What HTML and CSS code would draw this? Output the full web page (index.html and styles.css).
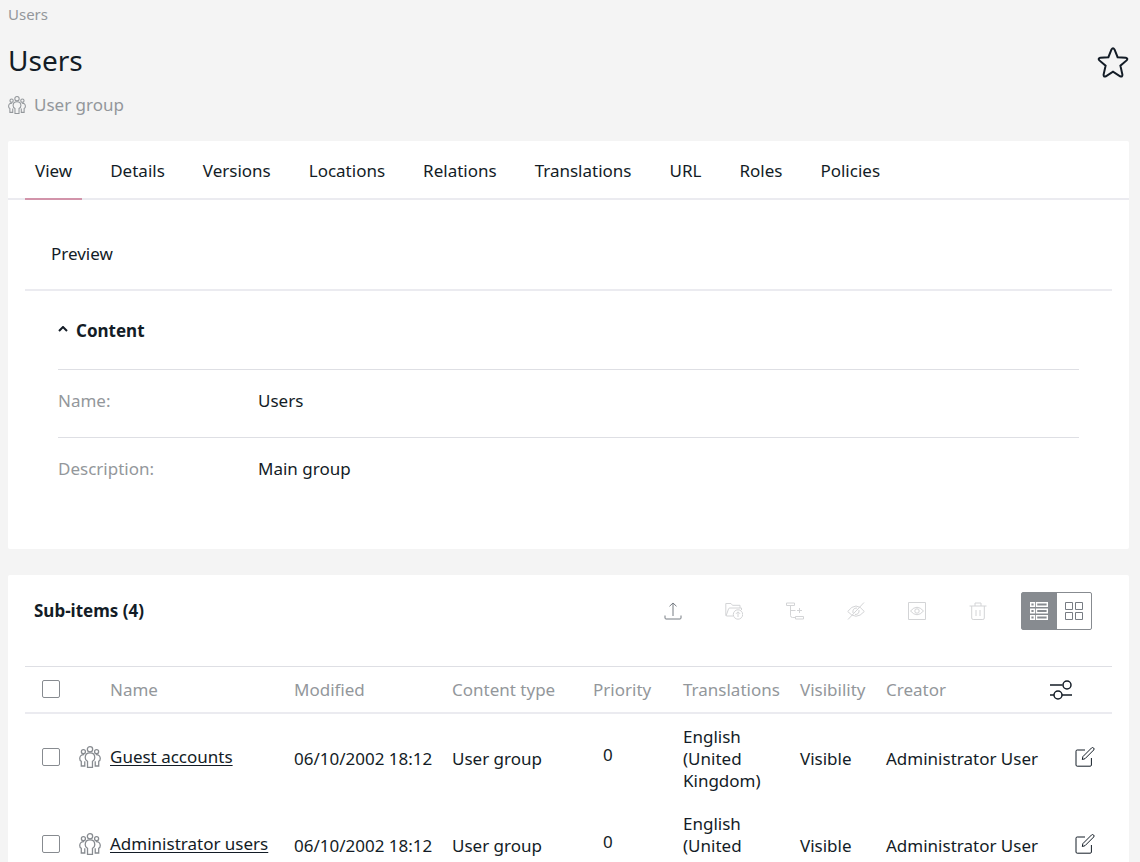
FILE: index.html
```html
<!DOCTYPE html>
<html lang="en">

<head>
    <meta charset="UTF-8">
    <meta name="viewport" content="width=device-width, initial-scale=1.0">
    <title>Users</title>
    <link rel="stylesheet" href="styles.css">
</head>

<body>
    <!-- shared icons -->
    <svg class="sprite" aria-hidden="true">
        <symbol id="user_group" viewBox="0 0 24 24">
            <circle cx="12" cy="3.6" r="2.9" />
            <circle cx="4.8" cy="6.2" r="2.2" />
            <circle cx="19.2" cy="6.2" r="2.2" />
            <path d="M9.3 23.3v-6.6c-1.7-.7-2.5-2-2.5-3.9 0-3.1 2-5.2 5.2-5.2s5.2 2.1 5.2 5.2c0 1.9-.8 3.2-2.5 3.9v6.6z" />
            <path d="M5.6 9.5C2.6 9.3.8 11 .8 13.5c0 1.6.7 2.6 1.7 3.2v5.1h3.8v-5.2" />
            <path d="M18.4 9.5c3-.2 4.8 1.5 4.8 4 0 1.6-.7 2.6-1.7 3.2v5.1h-3.8v-5.2" />
        </symbol>
        <symbol id="edit" viewBox="0 0 20 20">
            <path d="M10 3H2.2Q1 3 1 4.2V18q0 1.2 1.2 1.2h13q1.2 0 1.2-1.2v-7" />
            <path d="M7.3 12.5l.6-2.9L16.6.9q1-.8 2 .1t.1 2L10 11.7z" />
        </symbol>
    </svg>

    <header class="page_header">
        <nav class="breadcrumb" aria-label="Breadcrumb"><a href="#">Users</a></nav>
        <div class="title_row">
            <h1>Users</h1>
            <button class="icon_btn" type="button" aria-label="Bookmark">
                <svg class="star" viewBox="0 0 32 32"><path d="M14.5 2.5q1.5-2.5 3 0l3.1 7.7 8.2.5q2.6.6.8 2.7l-6.2 5.3 2 8.9q.2 2.6-2.3 1.7L16 24.7l-7.1 4.6q-2.5.9-2.3-1.7l2-8.9-6.2-5.3q-1.8-2.1.8-2.7l8.200-.5z" /></svg>
            </button>
        </div>
        <div class="content_type">
            <svg class="icon_small"><use href="#user_group" /></svg>
            <span>User group</span>
        </div>
    </header>

    <main>
        <section class="card">
            <nav class="tabs">
                <a class="active" href="#">View</a>
                <a href="#">Details</a>
                <a href="#">Versions</a>
                <a href="#">Locations</a>
                <a href="#">Relations</a>
                <a href="#">Translations</a>
                <a href="#">URL</a>
                <a href="#">Roles</a>
                <a href="#">Policies</a>
            </nav>
            <div class="preview">
                <h2>Preview</h2>
                <div class="fields">
                    <button class="collapse" type="button" aria-expanded="true">
                        <svg viewBox="0 0 10 6"><path d="M1 5l4-4 4 4" /></svg>
                        Content
                    </button>
                    <dl>
                        <div class="field">
                            <dt>Name:</dt>
                            <dd>Users</dd>
                        </div>
                        <div class="field">
                            <dt>Description:</dt>
                            <dd>Main group</dd>
                        </div>
                    </dl>
                </div>
            </div>
        </section>

        <section class="card sub_items">
            <div class="toolbar">
                <h2>Sub-items (4)</h2>
                <div class="actions">
                    <button class="icon_btn" type="button" aria-label="Upload">
                        <svg viewBox="0 0 18 18"><path d="M9 14V1M5.5 4.3L9 1l3.5 3.3M1 13.5V16q0 1 1 1h14q1 0 1-1v-2.5" /></svg>
                    </button>
                    <button class="icon_btn" type="button" aria-label="Move" disabled>
                        <svg viewBox="0 0 18 18"><path d="M8 14H2q-1 0-1.2-1V1.5H6L7.5 3.3H15V6M1 14L3.5 7q.3-1 1.3-1H16.5v2" /><circle cx="13" cy="12.5" r="4.7" /><path d="M13 15v-5M11 11.8l2-2 2 2" /></svg>
                    </button>
                    <button class="icon_btn" type="button" aria-label="Add location" disabled>
                        <svg viewBox="0 0 18 18"><path d="M.5 1h8v2.5h-8zM9.5 14.5h8V17h-8zM4.5 3.5v10q0 2 2 2h3M4.5 8.5h5M11 8.5h5M13.5 6v5" /></svg>
                    </button>
                    <button class="icon_btn" type="button" aria-label="Hide" disabled>
                        <svg viewBox="0 0 18 18"><path d="M.7 9.5Q9-1.5 17.3 9.5 9 19 .7 9.5zM1 17.5L17 .5" /><path d="M6 11q-.8-5 4-5M12 8q.5 4.5-4 4.5" /></svg>
                    </button>
                    <button class="icon_btn" type="button" aria-label="Reveal" disabled>
                        <svg viewBox="0 0 18 18"><path d="M.5.5h17v17H.5zM2.5 9Q9 1.5 15.5 9 9 16.5 2.5 9z" /><circle cx="9" cy="9" r="2.2" /></svg>
                    </button>
                    <button class="icon_btn" type="button" aria-label="Delete" disabled>
                        <svg viewBox="0 0 18 18"><path d="M.5 4h17M6 4V1h6v3M2.7 4v12q0 1.5 1.5 1.5h9.6q1.5 0 1.5-1.5V4M7 8v6M11 8v6" /></svg>
                    </button>
                </div>
                <div class="view_switch">
                    <button class="selected" type="button" aria-label="List view">
                        <svg viewBox="0 0 18 18"><path d="M.7.7h3.6v3.6H.7zM6.5.7h10.8v3.6H6.5zM.7 7.2h3.6v3.6H.7zM6.5 7.2h10.8v3.6H6.5zM.7 13.7h3.6v3.6H.7zM6.5 13.7h10.8v3.6H6.5z" /></svg>
                    </button>
                    <button type="button" aria-label="Grid view">
                        <svg viewBox="0 0 18 18"><path d="M.5.5h7v7h-7zM10.5.5h7v7h-7zM.5 10.5h7v7h-7zM10.5 10.5h7v7h-7z" /></svg>
                    </button>
                </div>
            </div>

            <table>
                <colgroup>
                    <col class="col_check">
                    <col class="col_icon">
                    <col>
                    <col class="col_modified">
                    <col class="col_type">
                    <col class="col_priority">
                    <col class="col_translations">
                    <col class="col_visibility">
                    <col class="col_creator">
                    <col class="col_edit">
                </colgroup>
                <thead>
                    <tr>
                        <th class="check"><input type="checkbox" aria-label="Select all"></th>
                        <th></th>
                        <th>Name</th>
                        <th>Modified</th>
                        <th>Content type</th>
                        <th>Priority</th>
                        <th>Translations</th>
                        <th>Visibility</th>
                        <th>Creator</th>
                        <th>
                            <button class="icon_btn" type="button" aria-label="Configure columns">
                                <svg class="settings" viewBox="0 0 22 20"><path d="M0 5h12.5M0 15h4M12 15h10" /><circle cx="17" cy="5" r="4" /><circle cx="8" cy="15" r="4" /></svg>
                            </button>
                        </th>
                    </tr>
                </thead>
                <tbody>
                    <tr>
                        <td class="check"><input type="checkbox" aria-label="Select Guest accounts"></td>
                        <td class="type_icon"><svg><use href="#user_group" /></svg></td>
                        <td class="name"><a href="#">Guest accounts</a></td>
                        <td>06/10/2002 18:12</td>
                        <td>User group</td>
                        <td class="priority">0</td>
                        <td>English (United Kingdom)</td>
                        <td>Visible</td>
                        <td>Administrator User</td>
                        <td class="edit">
                            <button class="icon_btn" type="button" aria-label="Edit Guest accounts"><svg><use href="#edit" /></svg></button>
                        </td>
                    </tr>
                    <tr>
                        <td class="check"><input type="checkbox" aria-label="Select Administrator users"></td>
                        <td class="type_icon"><svg><use href="#user_group" /></svg></td>
                        <td class="name"><a href="#">Administrator users</a></td>
                        <td>06/10/2002 18:12</td>
                        <td>User group</td>
                        <td class="priority">0</td>
                        <td>English (United Kingdom)</td>
                        <td>Visible</td>
                        <td>Administrator User</td>
                        <td class="edit">
                            <button class="icon_btn" type="button" aria-label="Edit Administrator users"><svg><use href="#edit" /></svg></button>
                        </td>
                    </tr>
                </tbody>
            </table>
        </section>
    </main>
</body>

</html>
```

FILE: styles.css
```css
* {
    margin: 0;
    padding: 0;
    box-sizing: border-box;
}
body {
    background-color: #f4f4f4;
    color: #131c26;
    font-family: "Noto Sans", sans-serif;
    font-size: 17px;
    line-height: 22px;
    padding: 0 11px 0 8px;
}
a {
    color: inherit;
    text-decoration: none;
}
button {
    font: inherit;
    color: inherit;
    background: none;
    border: 0;
    cursor: pointer;
}
svg {
    display: block;
    fill: none;
    stroke: currentColor;
}
.sprite {
    display: none;
}
.icon_btn {
    display: block;
}

/* header */
.page_header {
    height: 141px;
    padding-top: 4px;
}
.breadcrumb {
    font-size: 15px;
    line-height: 20px;
    color: #93979b;
}
.title_row {
    display: flex;
    justify-content: space-between;
    align-items: flex-end;
    padding-top: 17px;
}
h1 {
    font-size: 28px;
    font-weight: 400;
    line-height: 38px;
}
.star {
    width: 32px;
    height: 32px;
    stroke-width: 2;
}
.content_type {
    display: flex;
    align-items: center;
    gap: 8px;
    padding-top: 15px;
    color: #93979b;
}
.icon_small {
    width: 18px;
    height: 18px;
    stroke-width: 1.4;
}

/* cards */
.card {
    background-color: white;
    border-radius: 2px;
}
.tabs {
    display: flex;
    gap: 18px;
    height: 59px;
    padding: 0 17px;
    border-bottom: 2px solid #ebebf0;
}
.tabs a {
    height: 59px;
    padding: 0 10px;
    line-height: 60px;
}
.tabs .active {
    border-bottom: 2px solid #d294aa;
}
.preview {
    padding: 0 17px 44px;
}
.preview h2 {
    padding: 43px 26px 24px;
    border-bottom: 2px solid #ebebf0;
    font-size: 17px;
    font-weight: 400;
}
.fields {
    padding: 0 33px;
}
.collapse {
    display: flex;
    align-items: center;
    gap: 8px;
    padding: 29px 0 27px;
    font-weight: 700;
}
.collapse svg {
    width: 10px;
    height: 6px;
    margin-bottom: 4px;
    stroke-width: 2;
}
.field {
    display: flex;
    padding: 20px 0 25px;
    border-top: 1px solid #dedfe4;
}
.field dt {
    width: 200px;
    color: #93979b;
}

/* sub-items */
.sub_items {
    margin-top: 26px;
    padding: 0 17px;
}
.toolbar {
    display: flex;
    align-items: center;
    padding: 17px 20px 36px 9px;
}
.toolbar h2 {
    flex: 1;
    font-size: 17px;
    font-weight: 700;
}
.actions {
    display: flex;
    gap: 43px;
    margin-right: 34px;
    color: #777c83;
}
.actions svg {
    width: 18px;
    height: 18px;
}
.actions button:disabled {
    color: #d3d4d6;
    cursor: default;
}
.view_switch {
    display: flex;
    border: 1px solid #878b90;
    border-radius: 2px;
}
.view_switch button {
    padding: 9px 8px;
    color: #777c83;
}
.view_switch svg {
    width: 18px;
    height: 18px;
}
.view_switch .selected {
    border-right: 1px solid #878b90;
    background-color: #878b90;
    color: white;
}
.view_switch .selected svg {
    stroke-width: 1.4;
}

table {
    width: 100%;
    table-layout: fixed;
    border-collapse: collapse;
    border-top: 1px solid #dedfe4;
}
th {
    height: 46px;
    padding-top: 2px;
    border-bottom: 2px solid #ebebf0;
    color: #93979b;
    font-weight: 400;
    text-align: left;
    white-space: nowrap;
}
th.check {
    padding-top: 0;
}
th button {
    color: #131c26;
}
td {
    padding: 12px 0 9px;
}
.col_check {
    width: 54px;
}
.col_icon {
    width: 31px;
}
.col_modified {
    width: 158px;
}
.col_type {
    width: 141px;
}
.col_priority {
    width: 90px;
}
.col_translations {
    width: 117px;
}
.col_visibility {
    width: 86px;
}
.col_creator {
    width: 164px;
}
.col_edit {
    width: 62px;
}
.check {
    padding-left: 17px;
}
.check input {
    display: block;
    appearance: none;
    width: 18px;
    height: 18px;
    border: 1px solid #878b90;
    border-radius: 2px;
    background-color: white;
}
.check input:checked {
    background-color: #878b90;
}
.settings {
    width: 22px;
    height: 20px;
    stroke-width: 1.5;
}
td.check,
.type_icon,
.name,
.edit {
    padding-bottom: 12px;
}
.type_icon svg {
    width: 22px;
    height: 22px;
    color: #878b90;
    stroke-width: 1.4;
}
.name a {
    text-decoration: underline;
    text-decoration-thickness: 1px;
    text-underline-offset: 2px;
}
.priority {
    padding: 9px 10px 14px;
}
.edit {
    padding-left: 25px;
}
.edit svg {
    width: 20px;
    height: 20px;
}
```
